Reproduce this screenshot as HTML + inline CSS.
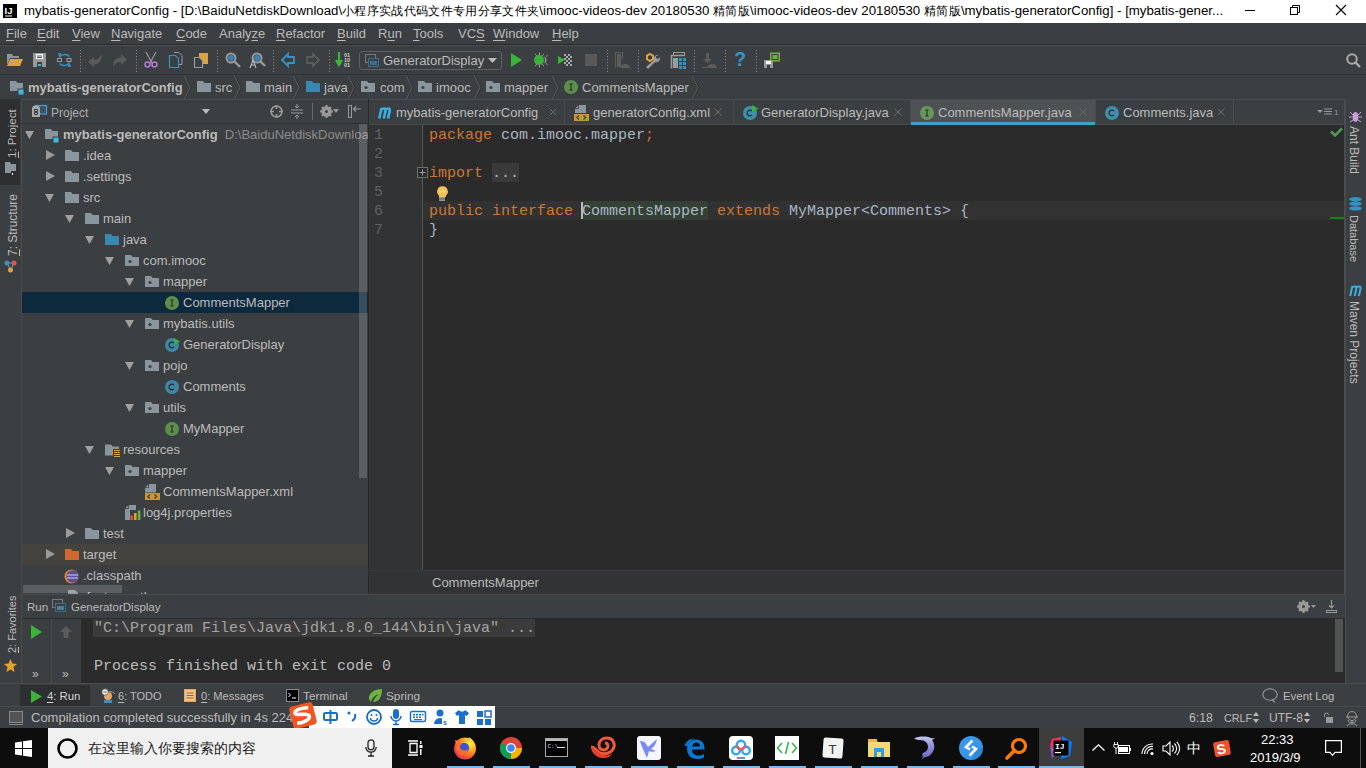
<!DOCTYPE html><html><head><meta charset="utf-8"><style>
*{margin:0;padding:0;box-sizing:border-box}
html,body{width:1366px;height:768px;overflow:hidden;background:#3c3f41;font-family:"Liberation Sans",sans-serif;font-size:13px;color:#bbbbbb}
.a{position:absolute}
.t{position:absolute;white-space:pre;line-height:16px}
.mono{font-family:"Liberation Mono",monospace}
u{text-decoration:underline;text-underline-offset:2px;text-decoration-thickness:1px}
svg{position:absolute;overflow:visible}
.cj{font-size:12.4px;letter-spacing:0.32px}
</style></head><body>
<div class="a" style="left:0px;top:0px;width:1366px;height:23px;background:#ffffff;"></div>
<svg style="left:3px;top:4px;" width="14" height="14" viewBox="0 0 14 14"><rect x="0" y="0" width="14" height="14" fill="#000"/><text x="1.5" y="9.5" font-family="Liberation Sans" font-weight="bold" font-size="9.5" fill="#fff">IJ</text><rect x="2" y="11.5" width="7" height="1" fill="#fff"/></svg>
<div class="t" style="left:24px;top:3px;color:#000000;font-size:13.25px;">mybatis-generatorConfig - [D:\BaiduNetdiskDownload\<span class="cj">小程序实战代码文件专用分享文件夹</span>\imooc-videos-dev 20180530 <span class="cj">精简版</span>\imooc-videos-dev 20180530 <span class="cj">精简版</span>\mybatis-generatorConfig] - [mybatis-gener...</div>
<svg style="left:1245px;top:10px;" width="10" height="1" viewBox="0 0 10 1"><rect width="10" height="1" fill="#000"/></svg>
<svg style="left:1290px;top:5px;" width="10" height="10" viewBox="0 0 10 10"><rect x="0.5" y="2.5" width="7" height="7" fill="none" stroke="#000"/><path d="M2.5 2.5V0.5H9.5V7.5H7.5" fill="none" stroke="#000"/></svg>
<svg style="left:1336px;top:5px;" width="10" height="10" viewBox="0 0 10 10"><path d="M0 0L10 10M10 0L0 10" stroke="#000" stroke-width="1.1"/></svg>
<div class="a" style="left:0px;top:23px;width:1366px;height:22px;background:#3c3f41;"></div>
<div class="a" style="left:0px;top:44px;width:1366px;height:1px;background:#2b2b2b;"></div>
<div class="t" style="left:6px;top:26px;color:#bbbbbb;font-size:13px;"><u>F</u>ile</div>
<div class="t" style="left:37px;top:26px;color:#bbbbbb;font-size:13px;"><u>E</u>dit</div>
<div class="t" style="left:72px;top:26px;color:#bbbbbb;font-size:13px;"><u>V</u>iew</div>
<div class="t" style="left:111px;top:26px;color:#bbbbbb;font-size:13px;"><u>N</u>avigate</div>
<div class="t" style="left:176px;top:26px;color:#bbbbbb;font-size:13px;"><u>C</u>ode</div>
<div class="t" style="left:219px;top:26px;color:#bbbbbb;font-size:13px;">Analy<u>z</u>e</div>
<div class="t" style="left:276px;top:26px;color:#bbbbbb;font-size:13px;"><u>R</u>efactor</div>
<div class="t" style="left:337px;top:26px;color:#bbbbbb;font-size:13px;"><u>B</u>uild</div>
<div class="t" style="left:378px;top:26px;color:#bbbbbb;font-size:13px;">R<u>u</u>n</div>
<div class="t" style="left:413px;top:26px;color:#bbbbbb;font-size:13px;"><u>T</u>ools</div>
<div class="t" style="left:458px;top:26px;color:#bbbbbb;font-size:13px;">VC<u>S</u></div>
<div class="t" style="left:493px;top:26px;color:#bbbbbb;font-size:13px;"><u>W</u>indow</div>
<div class="t" style="left:552px;top:26px;color:#bbbbbb;font-size:13px;"><u>H</u>elp</div>
<div class="a" style="left:0px;top:45px;width:1366px;height:30px;background:#3c3f41;"></div>
<div class="a" style="left:0px;top:45px;width:1366px;height:1px;background:#4b4d4f;"></div>
<div class="a" style="left:0px;top:74px;width:1366px;height:1px;background:#323232;"></div>
<svg style="left:80px;top:50px;" width="1" height="22" viewBox="0 0 1 22"><line x1="0.5" y1="0" x2="0.5" y2="22" stroke="#8a8a8a" stroke-dasharray="1 2"/></svg>
<svg style="left:136px;top:50px;" width="1" height="22" viewBox="0 0 1 22"><line x1="0.5" y1="0" x2="0.5" y2="22" stroke="#8a8a8a" stroke-dasharray="1 2"/></svg>
<svg style="left:217px;top:50px;" width="1" height="22" viewBox="0 0 1 22"><line x1="0.5" y1="0" x2="0.5" y2="22" stroke="#8a8a8a" stroke-dasharray="1 2"/></svg>
<svg style="left:273px;top:50px;" width="1" height="22" viewBox="0 0 1 22"><line x1="0.5" y1="0" x2="0.5" y2="22" stroke="#8a8a8a" stroke-dasharray="1 2"/></svg>
<svg style="left:329px;top:50px;" width="1" height="22" viewBox="0 0 1 22"><line x1="0.5" y1="0" x2="0.5" y2="22" stroke="#8a8a8a" stroke-dasharray="1 2"/></svg>
<svg style="left:607px;top:50px;" width="1" height="22" viewBox="0 0 1 22"><line x1="0.5" y1="0" x2="0.5" y2="22" stroke="#8a8a8a" stroke-dasharray="1 2"/></svg>
<svg style="left:638px;top:50px;" width="1" height="22" viewBox="0 0 1 22"><line x1="0.5" y1="0" x2="0.5" y2="22" stroke="#8a8a8a" stroke-dasharray="1 2"/></svg>
<svg style="left:694px;top:50px;" width="1" height="22" viewBox="0 0 1 22"><line x1="0.5" y1="0" x2="0.5" y2="22" stroke="#8a8a8a" stroke-dasharray="1 2"/></svg>
<svg style="left:725px;top:50px;" width="1" height="22" viewBox="0 0 1 22"><line x1="0.5" y1="0" x2="0.5" y2="22" stroke="#8a8a8a" stroke-dasharray="1 2"/></svg>
<svg style="left:756px;top:50px;" width="1" height="22" viewBox="0 0 1 22"><line x1="0.5" y1="0" x2="0.5" y2="22" stroke="#8a8a8a" stroke-dasharray="1 2"/></svg>
<svg style="left:7px;top:53px;" width="16" height="14" viewBox="0 0 16 14"><path d="M0 1h5l1 2h6v2H3L0 12z" fill="#8a969d"/><path d="M3 6h13l-3 7H0z" fill="#d9a343"/></svg>
<svg style="left:33px;top:53px;" width="13" height="14" viewBox="0 0 13 14"><path d="M0 0h13v14H0z" fill="#9a9a9a"/><rect x="3" y="1" width="7" height="5" fill="#fff"/><rect x="4" y="2.5" width="5" height="1" fill="#555"/><rect x="4" y="4" width="5" height="1" fill="#555"/><rect x="4" y="9" width="5" height="5" fill="#3c3f41"/><rect x="5" y="11" width="3" height="2" fill="#40b6e0"/></svg>
<svg style="left:57px;top:52px;" width="15" height="16" viewBox="0 0 15 16"><rect x="0.5" y="6.5" width="4" height="3" fill="none" stroke="#9a9a9a"/><rect x="10" y="6.5" width="4" height="3" fill="none" stroke="#9a9a9a"/><path d="M2.5 5.5A6 5.5 0 0 1 12.5 4.5" fill="none" stroke="#3592c4" stroke-width="1.5"/><path d="M0.5 1.5L4.5 1L3 5.5z" fill="#3592c4"/><path d="M12.5 10.5A6 5.5 0 0 1 2.5 11.5" fill="none" stroke="#3592c4" stroke-width="1.5"/><path d="M14.5 14.5L10.5 15L12 10.5z" fill="#3592c4"/></svg>
<svg style="left:88px;top:54px;" width="15" height="13" viewBox="0 0 15 13"><path d="M0 8L6 2.5V6C9 6 12 4 13.5 0C14.5 6 11 10.5 6 10.5V13z" fill="#5a5a5a"/></svg>
<svg style="left:112px;top:54px;" width="15" height="13" viewBox="0 0 15 13"><path d="M15 5.5L9 0V3.5C4 3.5 0.5 7 1.5 13C3 9 6 8 9 8V11z" fill="#5a5a5a"/></svg>
<svg style="left:144px;top:52px;" width="14" height="16" viewBox="0 0 14 16"><path d="M2 0L8 11M12 0L6 11" stroke="#9a9a9a" stroke-width="1.2"/><circle cx="3.5" cy="12.5" r="2.5" fill="none" stroke="#b87ad4" stroke-width="1.5"/><circle cx="10.5" cy="12.5" r="2.5" fill="none" stroke="#b87ad4" stroke-width="1.5"/></svg>
<svg style="left:169px;top:52px;" width="14" height="16" viewBox="0 0 14 16"><path d="M5 0.5h5l3 3v9h-3" fill="none" stroke="#9a9a9a"/><path d="M0.5 3.5h6l3 3v9h-9z" fill="none" stroke="#3592c4" stroke-width="1.2"/></svg>
<svg style="left:194px;top:52px;" width="14" height="16" viewBox="0 0 14 16"><rect x="5" y="1" width="9" height="11" fill="#d9a343"/><path d="M0.5 5.5h5l3 3v7h-8z" fill="#3c3f41" stroke="#9a9a9a" stroke-width="1.2"/></svg>
<svg style="left:225px;top:52px;" width="16" height="16" viewBox="0 0 16 16"><circle cx="6" cy="6" r="4.5" fill="none" stroke="#9a9a9a" stroke-width="2"/><circle cx="6" cy="6" r="3" fill="#3a84b8"/><path d="M9 9l6 6" stroke="#9a9a9a" stroke-width="2.4"/></svg>
<svg style="left:250px;top:52px;" width="16" height="17" viewBox="0 0 16 17"><circle cx="7" cy="6" r="4.5" fill="none" stroke="#9a9a9a" stroke-width="2"/><circle cx="7" cy="6" r="3" fill="#3a84b8"/><path d="M10 9l5 5" stroke="#9a9a9a" stroke-width="2.4"/><path d="M0 16L3 8L6 16M1 13h4" fill="none" stroke="#bbbbbb" stroke-width="1.1"/></svg>
<svg style="left:281px;top:53px;" width="14" height="14" viewBox="0 0 14 14"><path d="M1 7L7 1v3h6v6H7v3z" fill="none" stroke="#3592c4" stroke-width="1.8"/></svg>
<svg style="left:307px;top:53px;" width="13" height="14" viewBox="0 0 13 14"><path d="M12 7L6 1v3H0v6h6v3z" fill="none" stroke="#5c5c5c" stroke-width="1.8"/></svg>
<svg style="left:336px;top:52px;" width="17" height="16" viewBox="0 0 17 16"><path d="M3 0v10M0 8l3 5l3-5" stroke="#3bb33b" stroke-width="2.2" fill="#3bb33b"/><text x="8" y="5" font-size="5.5" font-family="Liberation Sans" font-weight="bold" fill="#cfcfcf">01</text><text x="8" y="10" font-size="5.5" font-family="Liberation Sans" font-weight="bold" fill="#cfcfcf">10</text><text x="8" y="15" font-size="5.5" font-family="Liberation Sans" font-weight="bold" fill="#cfcfcf">01</text></svg>
<div class="a" style="left:359px;top:51px;width:143px;height:19px;background:transparent;border:1px solid #5e6162;border-radius:3px"></div>
<svg style="left:365px;top:54px;" width="14" height="13" viewBox="0 0 14 13"><rect x="0.5" y="0.5" width="10" height="8" fill="none" stroke="#7a7a7a"/><rect x="3.5" y="4.5" width="10" height="8" fill="#3c3f41" stroke="#3d6e8c"/><rect x="5" y="7" width="7" height="4" fill="#3d6e8c"/></svg>
<div class="t" style="left:383px;top:53px;color:#bbbbbb;font-size:13px;">GeneratorDisplay</div>
<svg style="left:488px;top:58px;" width="9" height="6" viewBox="0 0 9 6"><path d="M0 0h9L4.5 5z" fill="#bbbbbb"/></svg>
<svg style="left:511px;top:53px;" width="11" height="14" viewBox="0 0 11 14"><path d="M0 0L11 7L0 14z" fill="#3bb33b"/></svg>
<svg style="left:533px;top:52px;" width="16" height="16" viewBox="0 0 16 16"><path d="M2 2l2 2M6.5 0.5v3M11 2l-2 2M2 14l2-2M6.5 15.5v-3M11 14l-2-2" stroke="#9a9a9a" stroke-width="1"/><circle cx="6" cy="8" r="5" fill="#3bb33b"/><path d="M2 7.5h8" stroke="#34a034" stroke-width="0.8"/><path d="M9.5 3.5a4.5 4.5 0 0 1 0 9a3 4.5 0 0 0 0-9z" fill="#3c3f41"/><path d="M10 4.5a3.5 3.5 0 0 1 0 7a2 3.5 0 0 0 0-7z" fill="#9a9a9a"/><path d="M13 4.5l1.5-1M13 11.5l1.5 1" stroke="#9a9a9a"/></svg>
<svg style="left:558px;top:53px;" width="15" height="14" viewBox="0 0 15 14"><path d="M0 3L7 7L0 11z" fill="#3bb33b"/><g fill="#aaaaaa"><rect x="6" y="1" width="2" height="2"/><rect x="10" y="1" width="2" height="2"/><rect x="8" y="3" width="2" height="2"/><rect x="12" y="3" width="2" height="2"/><rect x="6" y="5" width="2" height="2"/><rect x="10" y="5" width="2" height="2"/><rect x="8" y="7" width="2" height="2"/><rect x="12" y="7" width="2" height="2"/><rect x="6" y="9" width="2" height="2"/><rect x="10" y="9" width="2" height="2"/><rect x="8" y="11" width="2" height="2"/><rect x="12" y="11" width="2" height="2"/></g></svg>
<svg style="left:585px;top:54px;" width="12" height="12" viewBox="0 0 12 12"><rect width="12" height="12" fill="#595959"/></svg>
<svg style="left:615px;top:52px;" width="15" height="16" viewBox="0 0 15 16"><path d="M0.5 15.5V0.5h7v7" fill="none" stroke="#5c5c5c" stroke-width="1.2"/><rect x="2" y="2" width="4" height="13" fill="#5c5c5c"/><path d="M5 16a5 4 0 0 1 10 0z" fill="#5c5c5c"/></svg>
<svg style="left:645px;top:53px;" width="16" height="16" viewBox="0 0 16 16"><path d="M5 1l3 1.7v3.5L5 8L2 6.2V2.7z" fill="none" stroke="#d9a343" stroke-width="2"/><path d="M14 2a4 4 0 0 0-5 5L1 14l2 2l7-7a4 4 0 0 0 5-5l-2 2l-2-1l-0-2z" fill="#9a9a9a"/></svg>
<svg style="left:671px;top:52px;" width="16" height="17" viewBox="0 0 16 17"><rect x="2.5" y="0.5" width="11" height="3" fill="none" stroke="#9a9a9a"/><path d="M0.5 16.5V3.5h12" fill="none" stroke="#9a9a9a" stroke-width="1.5"/><rect x="2" y="6" width="5" height="10" fill="#9a9a9a"/><g fill="#3592c4"><rect x="8" y="6" width="3" height="3"/><rect x="12" y="6" width="3" height="3"/><rect x="8" y="10" width="3" height="3"/><rect x="12" y="10" width="3" height="3"/><rect x="8" y="14" width="3" height="3"/><rect x="12" y="14" width="3" height="3"/></g></svg>
<svg style="left:702px;top:53px;" width="15" height="15" viewBox="0 0 15 15"><rect x="4" y="0" width="3" height="8" fill="#5c5c5c"/><path d="M1 6l4.5 4l4.5-4z" fill="#5c5c5c"/><path d="M5 15a5 4 0 0 1 10 0z" fill="#5c5c5c"/><rect x="0" y="14" width="6" height="1" fill="#5c5c5c"/></svg>
<div class="t" style="left:734px;top:47px;color:#3592c4;font-size:20px;font-weight:bold;line-height:24px">?</div>
<svg style="left:764px;top:52px;" width="17" height="16" viewBox="0 0 17 16"><rect x="6" y="0.5" width="10" height="9" fill="#62b543"/><rect x="8" y="2.5" width="6" height="5" fill="none" stroke="#3c3f41"/><path d="M0 8h9v8H0z" fill="#9a9a9a"/><rect x="2" y="9" width="5" height="3" fill="#fff"/><rect x="3" y="13" width="3" height="3" fill="#3c3f41"/></svg>
<svg style="left:1346px;top:53px;" width="15" height="15" viewBox="0 0 15 15"><circle cx="6" cy="6" r="4.8" fill="none" stroke="#aaaaaa" stroke-width="2"/><path d="M9.5 9.5l4.5 4.5" stroke="#aaaaaa" stroke-width="2.4"/></svg>
<div class="a" style="left:0px;top:75px;width:1366px;height:24px;background:#3c3f41;"></div>
<div class="a" style="left:21px;top:99px;width:1345px;height:1px;background:#4b4b4b;"></div>
<svg style="left:10px;top:81px;" width="15" height="15" viewBox="0 0 15 15"><path d="M0 0h6l1.5 2H13v8H0z" fill="#8a969d"/><rect x="8" y="8" width="6" height="6" fill="#40b6e0" stroke="#3c3f41" stroke-width="1"/></svg>
<div class="t" style="left:28px;top:80px;color:#bbbbbb;font-size:13px;font-weight:bold">mybatis-generatorConfig</div>
<svg style="left:184px;top:76px;" width="8" height="23" viewBox="0 0 8 23"><path d="M1.5 0L7 11.5L1.5 23" fill="none" stroke="#2f3133" stroke-width="1"/><path d="M0.5 0L6 11.5L0.5 23" fill="none" stroke="#5a5d5f" stroke-width="1"/></svg>
<svg style="left:197px;top:81px;" width="14" height="11" viewBox="0 0 14 11"><path d="M0 0h6l1.5 2H14v9H0z" fill="#8a969d"/></svg>
<div class="t" style="left:215px;top:80px;color:#bbbbbb;font-size:13px;">src</div>
<svg style="left:234px;top:76px;" width="8" height="23" viewBox="0 0 8 23"><path d="M1.5 0L7 11.5L1.5 23" fill="none" stroke="#2f3133" stroke-width="1"/><path d="M0.5 0L6 11.5L0.5 23" fill="none" stroke="#5a5d5f" stroke-width="1"/></svg>
<svg style="left:246px;top:81px;" width="14" height="11" viewBox="0 0 14 11"><path d="M0 0h6l1.5 2H14v9H0z" fill="#8a969d"/></svg>
<div class="t" style="left:264px;top:80px;color:#bbbbbb;font-size:13px;">main</div>
<svg style="left:293px;top:76px;" width="8" height="23" viewBox="0 0 8 23"><path d="M1.5 0L7 11.5L1.5 23" fill="none" stroke="#2f3133" stroke-width="1"/><path d="M0.5 0L6 11.5L0.5 23" fill="none" stroke="#5a5d5f" stroke-width="1"/></svg>
<svg style="left:306px;top:81px;" width="14" height="11" viewBox="0 0 14 11"><path d="M0 0h6l1.5 2H14v9H0z" fill="#3a88b0"/></svg>
<div class="t" style="left:324px;top:80px;color:#bbbbbb;font-size:13px;">java</div>
<svg style="left:348px;top:76px;" width="8" height="23" viewBox="0 0 8 23"><path d="M1.5 0L7 11.5L1.5 23" fill="none" stroke="#2f3133" stroke-width="1"/><path d="M0.5 0L6 11.5L0.5 23" fill="none" stroke="#5a5d5f" stroke-width="1"/></svg>
<svg style="left:361px;top:81px;" width="14" height="11" viewBox="0 0 14 11"><path d="M0 0h6l1.5 2H14v9H0z" fill="#8a969d"/><circle cx="5" cy="6.5" r="1.6" fill="#3c3f41"/></svg>
<div class="t" style="left:380px;top:80px;color:#bbbbbb;font-size:13px;">com</div>
<svg style="left:406px;top:76px;" width="8" height="23" viewBox="0 0 8 23"><path d="M1.5 0L7 11.5L1.5 23" fill="none" stroke="#2f3133" stroke-width="1"/><path d="M0.5 0L6 11.5L0.5 23" fill="none" stroke="#5a5d5f" stroke-width="1"/></svg>
<svg style="left:418px;top:81px;" width="14" height="11" viewBox="0 0 14 11"><path d="M0 0h6l1.5 2H14v9H0z" fill="#8a969d"/><circle cx="5" cy="6.5" r="1.6" fill="#3c3f41"/></svg>
<div class="t" style="left:436px;top:80px;color:#bbbbbb;font-size:13px;">imooc</div>
<svg style="left:474px;top:76px;" width="8" height="23" viewBox="0 0 8 23"><path d="M1.5 0L7 11.5L1.5 23" fill="none" stroke="#2f3133" stroke-width="1"/><path d="M0.5 0L6 11.5L0.5 23" fill="none" stroke="#5a5d5f" stroke-width="1"/></svg>
<svg style="left:486px;top:81px;" width="14" height="11" viewBox="0 0 14 11"><path d="M0 0h6l1.5 2H14v9H0z" fill="#8a969d"/><circle cx="5" cy="6.5" r="1.6" fill="#3c3f41"/></svg>
<div class="t" style="left:504px;top:80px;color:#bbbbbb;font-size:13px;">mapper</div>
<svg style="left:552px;top:76px;" width="8" height="23" viewBox="0 0 8 23"><path d="M1.5 0L7 11.5L1.5 23" fill="none" stroke="#2f3133" stroke-width="1"/><path d="M0.5 0L6 11.5L0.5 23" fill="none" stroke="#5a5d5f" stroke-width="1"/></svg>
<svg style="left:564px;top:80px;" width="14" height="14" viewBox="0 0 14 14"><circle cx="7" cy="7" r="7" fill="#5b8f4a"/><path d="M5.3 4h3.4M7 4v6M5.3 10h3.4" stroke="#2b2b2b" stroke-width="1.1"/></svg>
<div class="t" style="left:582px;top:80px;color:#bbbbbb;font-size:13px;">CommentsMapper</div>
<svg style="left:692px;top:76px;" width="8" height="23" viewBox="0 0 8 23"><path d="M1.5 0L7 11.5L1.5 23" fill="none" stroke="#2f3133" stroke-width="1"/><path d="M0.5 0L6 11.5L0.5 23" fill="none" stroke="#5a5d5f" stroke-width="1"/></svg>
<div class="a" style="left:0px;top:99px;width:21px;height:584px;background:#3c3f41;"></div>
<div class="a" style="left:21px;top:99px;width:1px;height:584px;background:#4b4b4b;"></div>
<div class="a" style="left:0px;top:99px;width:20px;height:86px;background:#2d2f30;"></div>
<div class="t" style="left:4px;top:158px;color:#bbbbbb;font-size:11.5px;transform-origin:0 0;transform:rotate(-90deg)"><u>1</u>: Project</div>
<svg style="left:5px;top:162px;" width="11" height="13" viewBox="0 0 11 13"><path d="M0 0h5l1 2h5v9H0z" fill="#8a969d"/><rect x="6" y="9" width="5" height="4" fill="#2d2f30"/><rect x="7" y="11" width="1" height="2" fill="#fff"/></svg>
<div class="t" style="left:5px;top:256px;color:#bbbbbb;font-size:12px;transform-origin:0 0;transform:rotate(-90deg)"><u>7</u>: Structure</div>
<svg style="left:4px;top:260px;" width="13" height="13" viewBox="0 0 13 13"><path d="M3 3L6.5 10L10 3z" fill="none" stroke="#9a9a9a"/><circle cx="3" cy="3" r="2.5" fill="#3592c4"/><circle cx="10" cy="3" r="2.5" fill="#e05555"/><circle cx="6.5" cy="10" r="2.5" fill="#d9a343"/></svg>
<div class="t" style="left:4px;top:653px;color:#bbbbbb;font-size:11px;transform-origin:0 0;transform:rotate(-90deg)"><u>2</u>: Favorites</div>
<svg style="left:4px;top:659px;" width="13" height="13" viewBox="0 0 13 13"><path d="M6.5 0L8.5 4.5L13 5L9.5 8L10.5 13L6.5 10.5L2.5 13L3.5 8L0 5L4.5 4.5z" fill="#e3a32a"/></svg>
<div class="a" style="left:22px;top:100px;width:346px;height:494px;background:#3c3f41;"></div>
<div class="a" style="left:368px;top:99px;width:1px;height:495px;background:#2b2b2b;"></div>
<div class="a" style="left:21px;top:123px;width:347px;height:1px;background:#323232;"></div>
<svg style="left:32px;top:104px;" width="15" height="14" viewBox="0 0 15 14"><rect x="3.5" y="1.5" width="11" height="8.5" fill="#3a5566" stroke="#4a9fd0" stroke-width="1.2"/><path d="M0 3.5L2 1.5H6L8 3.5V13H0z" fill="#a8a8a8"/><path d="M2.5 5.5h3v2h-3zM2.5 8.5h3v2h-3z" fill="none" stroke="#3c3f41" stroke-width="1"/></svg>
<div class="t" style="left:51px;top:105px;color:#adadad;font-size:12px;">Project</div>
<svg style="left:202px;top:109px;" width="8" height="5" viewBox="0 0 8 5"><path d="M0 0h8L4 5z" fill="#bbbbbb"/></svg>
<svg style="left:270px;top:105px;" width="13" height="13" viewBox="0 0 13 13"><circle cx="6.5" cy="6.5" r="5.5" fill="none" stroke="#9a9a9a" stroke-width="1.5"/><path d="M6.5 0v4M6.5 9v4M0 6.5h4M9 6.5h4" stroke="#9a9a9a" stroke-width="1.5"/></svg>
<svg style="left:291px;top:104px;" width="12" height="15" viewBox="0 0 12 15"><path d="M0 6h12M0 9h12M6 0v4M4 2l2 2l2-2M6 15v-4M4 13l2-2l2 2" fill="none" stroke="#9a9a9a"/></svg>
<div class="a" style="left:312px;top:103px;width:1px;height:17px;background:#6a6a6a;"></div>
<svg style="left:320px;top:105px;" width="13" height="13" viewBox="0 0 13 13"><circle cx="6.5" cy="6.5" r="4" fill="none" stroke="#9a9a9a" stroke-width="2.6"/><path d="M6.5 0v13M0 6.5h13M2 2l9 9M11 2l-9 9" stroke="#9a9a9a" stroke-width="2"/><circle cx="6.5" cy="6.5" r="1.5" fill="#3c3f41"/></svg>
<svg style="left:333px;top:109px;" width="6" height="4" viewBox="0 0 6 4"><path d="M0 0h6L3 4z" fill="#9a9a9a"/></svg>
<svg style="left:348px;top:105px;" width="13" height="13" viewBox="0 0 13 13"><rect x="0.5" y="0.5" width="3" height="12" fill="none" stroke="#9a9a9a"/><path d="M13 4H6M8 1.5L5.5 4L8 6.5" fill="none" stroke="#9a9a9a" stroke-width="1.2"/></svg>
<div class="a" style="left:22px;top:292px;width:346px;height:21px;background:#0d293e;"></div>
<div class="a" style="left:22px;top:544px;width:346px;height:21px;background:#45433d;"></div>
<div class="a" style="left:21px;top:124px;width:347px;height:470px;overflow:hidden">
<svg style="left:4px;top:7px" width="9" height="8"><path d="M0 0h9L4.5 8z" fill="#a0a0a0"/></svg>
<svg style="left:24px;top:5px" width="15" height="15"><path d="M0 0h6l1.5 2H13v8H0z" fill="#8a969d"/><rect x="8" y="8" width="6" height="6" fill="#40b6e0" stroke="#3c3f41" stroke-width="1"/></svg>
<div class="t" style="left:42px;top:3px;color:#bbbbbb"><b style="color:#bbbbbb">mybatis-generatorConfig</b>  <span style="color:#8c8c8c">D:\BaiduNetdiskDownload\小程序</span></div>
<svg style="left:25px;top:26px" width="9" height="10"><path d="M0 0L9 5L0 10z" fill="#9a9a9a"/></svg>
<svg style="left:44px;top:26px" width="14" height="11"><path d="M0 0h6l1.5 2H14v9H0z" fill="#8a969d"/></svg>
<div class="t" style="left:62px;top:24px;color:#bbbbbb">.idea</div>
<svg style="left:25px;top:47px" width="9" height="10"><path d="M0 0L9 5L0 10z" fill="#9a9a9a"/></svg>
<svg style="left:44px;top:47px" width="14" height="11"><path d="M0 0h6l1.5 2H14v9H0z" fill="#8a969d"/></svg>
<div class="t" style="left:62px;top:45px;color:#bbbbbb">.settings</div>
<svg style="left:24px;top:70px" width="9" height="8"><path d="M0 0h9L4.5 8z" fill="#a0a0a0"/></svg>
<svg style="left:44px;top:68px" width="14" height="11"><path d="M0 0h6l1.5 2H14v9H0z" fill="#8a969d"/></svg>
<div class="t" style="left:62px;top:66px;color:#bbbbbb">src</div>
<svg style="left:44px;top:91px" width="9" height="8"><path d="M0 0h9L4.5 8z" fill="#a0a0a0"/></svg>
<svg style="left:64px;top:89px" width="14" height="11"><path d="M0 0h6l1.5 2H14v9H0z" fill="#8a969d"/></svg>
<div class="t" style="left:82px;top:87px;color:#bbbbbb">main</div>
<svg style="left:64px;top:112px" width="9" height="8"><path d="M0 0h9L4.5 8z" fill="#a0a0a0"/></svg>
<svg style="left:84px;top:110px" width="14" height="11"><path d="M0 0h6l1.5 2H14v9H0z" fill="#3a88b0"/></svg>
<div class="t" style="left:102px;top:108px;color:#bbbbbb">java</div>
<svg style="left:84px;top:133px" width="9" height="8"><path d="M0 0h9L4.5 8z" fill="#a0a0a0"/></svg>
<svg style="left:104px;top:131px" width="14" height="11"><path d="M0 0h6l1.5 2H14v9H0z" fill="#8a969d"/><circle cx="5" cy="6.5" r="1.6" fill="#3c3f41"/></svg>
<div class="t" style="left:122px;top:129px;color:#bbbbbb">com.imooc</div>
<svg style="left:104px;top:154px" width="9" height="8"><path d="M0 0h9L4.5 8z" fill="#a0a0a0"/></svg>
<svg style="left:124px;top:152px" width="14" height="11"><path d="M0 0h6l1.5 2H14v9H0z" fill="#8a969d"/><circle cx="5" cy="6.5" r="1.6" fill="#3c3f41"/></svg>
<div class="t" style="left:142px;top:150px;color:#bbbbbb">mapper</div>
<svg style="left:144px;top:172px" width="14" height="14"><circle cx="7" cy="7" r="7" fill="#5b8f4a"/><path d="M5.3 4h3.4M7 4v6M5.3 10h3.4" stroke="#2b2b2b" stroke-width="1.1"/></svg>
<div class="t" style="left:162px;top:171px;color:#bbbbbb">CommentsMapper</div>
<svg style="left:104px;top:196px" width="9" height="8"><path d="M0 0h9L4.5 8z" fill="#a0a0a0"/></svg>
<svg style="left:124px;top:194px" width="14" height="11"><path d="M0 0h6l1.5 2H14v9H0z" fill="#8a969d"/><circle cx="5" cy="6.5" r="1.6" fill="#3c3f41"/></svg>
<div class="t" style="left:142px;top:192px;color:#bbbbbb">mybatis.utils</div>
<svg style="left:144px;top:214px" width="15" height="14"><circle cx="7" cy="7" r="7" fill="#3d88a6"/><path d="M9 5.2a2.8 2.8 0 1 0 0 3.6" fill="none" stroke="#2b2b2b" stroke-width="1.2"/><path d="M9 0L15 3.5L9 7z" fill="#3bb33b"/></svg>
<div class="t" style="left:162px;top:213px;color:#bbbbbb">GeneratorDisplay</div>
<svg style="left:104px;top:238px" width="9" height="8"><path d="M0 0h9L4.5 8z" fill="#a0a0a0"/></svg>
<svg style="left:124px;top:236px" width="14" height="11"><path d="M0 0h6l1.5 2H14v9H0z" fill="#8a969d"/><circle cx="5" cy="6.5" r="1.6" fill="#3c3f41"/></svg>
<div class="t" style="left:142px;top:234px;color:#bbbbbb">pojo</div>
<svg style="left:144px;top:256px" width="15" height="14"><circle cx="7" cy="7" r="7" fill="#3d88a6"/><path d="M9 5.2a2.8 2.8 0 1 0 0 3.6" fill="none" stroke="#2b2b2b" stroke-width="1.2"/></svg>
<div class="t" style="left:162px;top:255px;color:#bbbbbb">Comments</div>
<svg style="left:104px;top:280px" width="9" height="8"><path d="M0 0h9L4.5 8z" fill="#a0a0a0"/></svg>
<svg style="left:124px;top:278px" width="14" height="11"><path d="M0 0h6l1.5 2H14v9H0z" fill="#8a969d"/><circle cx="5" cy="6.5" r="1.6" fill="#3c3f41"/></svg>
<div class="t" style="left:142px;top:276px;color:#bbbbbb">utils</div>
<svg style="left:144px;top:298px" width="14" height="14"><circle cx="7" cy="7" r="7" fill="#5b8f4a"/><path d="M5.3 4h3.4M7 4v6M5.3 10h3.4" stroke="#2b2b2b" stroke-width="1.1"/></svg>
<div class="t" style="left:162px;top:297px;color:#bbbbbb">MyMapper</div>
<svg style="left:64px;top:322px" width="9" height="8"><path d="M0 0h9L4.5 8z" fill="#a0a0a0"/></svg>
<svg style="left:84px;top:320px" width="16" height="14"><path d="M0 0.5h6l1.5 2H14v9H0z" fill="#8a969d"/><rect x="8" y="5" width="8" height="9" fill="#3c3f41"/><path d="M9 6.5h6M9 8.5h6M9 10.5h6M9 12.5h6" stroke="#e0a030" stroke-width="1.1"/></svg>
<div class="t" style="left:102px;top:318px;color:#bbbbbb">resources</div>
<svg style="left:84px;top:343px" width="9" height="8"><path d="M0 0h9L4.5 8z" fill="#a0a0a0"/></svg>
<svg style="left:104px;top:341px" width="14" height="11"><path d="M0 0h6l1.5 2H14v9H0z" fill="#8a969d"/><circle cx="5" cy="6.5" r="1.6" fill="#3c3f41"/></svg>
<div class="t" style="left:122px;top:339px;color:#bbbbbb">mapper</div>
<svg style="left:124px;top:360px" width="16" height="17"><path d="M0 3.5L3.5 0H11V8.5H0z" fill="#8a969d"/><path d="M0 3.5h3.5V0" fill="none" stroke="#3c3f41" stroke-width="0.8"/><rect x="0" y="9" width="15" height="7" fill="#c9953a"/><path d="M5 10.5L2.8 12.5L5 14.5M9.5 10.5L11.7 12.5L9.5 14.5" fill="none" stroke="#3c3f41" stroke-width="1.2"/></svg>
<div class="t" style="left:142px;top:360px;color:#bbbbbb">CommentsMapper.xml</div>
<svg style="left:104px;top:381px" width="16" height="16"><path d="M0 3.5L3.5 0H11V15H0z" fill="#8a969d"/><path d="M0 3.5h3.5V0" fill="none" stroke="#3c3f41" stroke-width="0.8"/><rect x="5" y="5" width="11" height="11" fill="#3c3f41"/><rect x="5.5" y="10.5" width="2.4" height="4.5" fill="#e8572a"/><rect x="9" y="8" width="2.6" height="7" fill="#e0a030"/><rect x="12.8" y="5.5" width="2.6" height="9.5" fill="#62b543"/></svg>
<div class="t" style="left:122px;top:381px;color:#bbbbbb">log4j.properties</div>
<svg style="left:45px;top:404px" width="9" height="10"><path d="M0 0L9 5L0 10z" fill="#9a9a9a"/></svg>
<svg style="left:64px;top:404px" width="14" height="11"><path d="M0 0h6l1.5 2H14v9H0z" fill="#8a969d"/></svg>
<div class="t" style="left:82px;top:402px;color:#bbbbbb">test</div>
<svg style="left:25px;top:425px" width="9" height="10"><path d="M0 0L9 5L0 10z" fill="#9a9a9a"/></svg>
<svg style="left:44px;top:425px" width="14" height="11"><path d="M0 0h6l1.5 2H14v9H0z" fill="#d0692f"/></svg>
<div class="t" style="left:62px;top:423px;color:#bbbbbb">target</div>
<svg style="left:43px;top:445px" width="15" height="15"><circle cx="7.5" cy="7.5" r="7" fill="#e8891f"/><circle cx="8.5" cy="7.5" r="6.2" fill="#5b4d9a"/><path d="M3 6h11M3 9h11" stroke="#d8d0f0" stroke-width="1.2"/></svg>
<div class="t" style="left:62px;top:444px;color:#bbbbbb">.classpath</div>
<svg style="left:44px;top:466px" width="15" height="15"><path d="M3 0h7l3 3v12H3z" fill="#8a969d"/></svg>
<div class="t" style="left:62px;top:465px;color:#bbbbbb">.factorypath</div>
</div>
<div class="a" style="left:359px;top:124px;width:8px;height:354px;background:rgba(255,255,255,0.17);"></div>
<div class="a" style="left:23px;top:585px;width:99px;height:8px;background:rgba(255,255,255,0.17);"></div>
<div class="a" style="left:369px;top:100px;width:976px;height:24px;background:#3c3f41;"></div>
<div class="a" style="left:911px;top:100px;width:184px;height:22px;background:#4e5254;"></div>
<div class="a" style="left:564px;top:100px;width:1px;height:24px;background:#4b4b4b;"></div>
<div class="a" style="left:733px;top:100px;width:1px;height:24px;background:#4b4b4b;"></div>
<div class="a" style="left:910px;top:100px;width:1px;height:24px;background:#4b4b4b;"></div>
<div class="a" style="left:1095px;top:100px;width:1px;height:24px;background:#4b4b4b;"></div>
<div class="a" style="left:1233px;top:100px;width:1px;height:24px;background:#4b4b4b;"></div>
<div class="a" style="left:369px;top:124px;width:976px;height:1px;background:#4b4b4b;"></div>
<div class="a" style="left:911px;top:122px;width:184px;height:3px;background:#40a0c2;"></div>
<svg style="left:378px;top:107px;" width="15" height="12" viewBox="0 0 15 12"><path d="M1.2 11.5L3.6 1M3.2 3C4.5 1.2 7.5 0.8 7.6 2.6C7.7 3.5 7.2 5.5 5.8 11.5M7.4 3C8.7 1.2 11.7 0.8 11.8 2.6C11.9 3.5 11.4 5.5 10 11.5" fill="none" stroke="#3ab0e0" stroke-width="2.6"/></svg>
<div class="t" style="left:396px;top:105px;color:#bbbbbb;font-size:13px;">mybatis-generatorConfig</div>
<svg style="left:549px;top:108px;" width="8" height="8" viewBox="0 0 8 8"><path d="M0.5 0.5l7 7M7.5 0.5l-7 7" stroke="#6a6a6a" stroke-width="1"/></svg>
<svg style="left:574px;top:105px;" width="16" height="16" viewBox="0 0 16 16"><path d="M1 3.5L4.5 0H12V8H1z" fill="#8a969d"/><path d="M1 3.5h3.5V0" fill="none" stroke="#3c3f41" stroke-width="0.8"/><rect x="0" y="9" width="15" height="7" fill="#c9953a"/><path d="M5 10.5L2.8 12.5L5 14.5M9.5 10.5L11.7 12.5L9.5 14.5" fill="none" stroke="#3c3f41" stroke-width="1.2"/></svg>
<div class="t" style="left:593px;top:105px;color:#bbbbbb;font-size:13px;">generatorConfig.xml</div>
<svg style="left:714px;top:108px;" width="8" height="8" viewBox="0 0 8 8"><path d="M0.5 0.5l7 7M7.5 0.5l-7 7" stroke="#6a6a6a" stroke-width="1"/></svg>
<svg style="left:743px;top:105px;" width="16" height="15" viewBox="0 0 16 15"><circle cx="7" cy="8" r="7" fill="#3e8fad"/><path d="M9 6.2a2.8 2.8 0 1 0 0 3.6" fill="none" stroke="#2b2b2b" stroke-width="1.2"/><path d="M9 0L15.5 3.5L9 7z" fill="#3bb33b"/></svg>
<div class="t" style="left:761px;top:105px;color:#bbbbbb;font-size:13px;">GeneratorDisplay.java</div>
<svg style="left:894px;top:108px;" width="8" height="8" viewBox="0 0 8 8"><path d="M0.5 0.5l7 7M7.5 0.5l-7 7" stroke="#6a6a6a" stroke-width="1"/></svg>
<svg style="left:920px;top:106px;" width="14" height="14" viewBox="0 0 14 14"><circle cx="7" cy="7" r="7" fill="#66985a"/><path d="M5.3 4h3.4M7 4v6M5.3 10h3.4" stroke="#2b2b2b" stroke-width="1.1"/></svg>
<div class="t" style="left:938px;top:105px;color:#bbbbbb;font-size:13px;">CommentsMapper.java</div>
<svg style="left:1079px;top:108px;" width="8" height="8" viewBox="0 0 8 8"><path d="M0.5 0.5l7 7M7.5 0.5l-7 7" stroke="#6a6a6a" stroke-width="1"/></svg>
<svg style="left:1105px;top:106px;" width="14" height="14" viewBox="0 0 14 14"><circle cx="7" cy="7" r="7" fill="#3e8fad"/><path d="M9 5.2a2.8 2.8 0 1 0 0 3.6" fill="none" stroke="#2b2b2b" stroke-width="1.2"/></svg>
<div class="t" style="left:1123px;top:105px;color:#bbbbbb;font-size:13px;">Comments.java</div>
<svg style="left:1217px;top:108px;" width="8" height="8" viewBox="0 0 8 8"><path d="M0.5 0.5l7 7M7.5 0.5l-7 7" stroke="#6a6a6a" stroke-width="1"/></svg>
<svg style="left:1317px;top:108px;" width="22" height="8" viewBox="0 0 22 8"><path d="M0 2h6L3 5z" fill="#9a9a9a"/><path d="M7 1h8M7 3.5h8M7 6h8" stroke="#9a9a9a"/><text x="17" y="7" font-size="8" font-family="Liberation Sans" fill="#9a9a9a">1</text></svg>
<div class="a" style="left:369px;top:125px;width:976px;height:445px;background:#2b2b2b;"></div>
<div class="a" style="left:369px;top:125px;width:53px;height:445px;background:#313335;"></div>
<div class="a" style="left:422px;top:125px;width:1px;height:445px;background:#555555;"></div>
<div class="a" style="left:492px;top:163px;width:27px;height:19px;background:#3a3a3a;"></div>
<div class="a" style="left:423px;top:201px;width:922px;height:19px;background:#323232;"></div>
<div class="a" style="left:582px;top:201px;width:126px;height:19px;background:#344134;"></div>
<div class="t mono" style="left:374px;top:126px;color:#606366;font-size:15px;line-height:19px">1</div>
<div class="t mono" style="left:374px;top:145px;color:#606366;font-size:15px;line-height:19px">2</div>
<div class="t mono" style="left:374px;top:164px;color:#606366;font-size:15px;line-height:19px">3</div>
<div class="t mono" style="left:374px;top:183px;color:#606366;font-size:15px;line-height:19px">5</div>
<div class="t mono" style="left:374px;top:202px;color:#606366;font-size:15px;line-height:19px">6</div>
<div class="t mono" style="left:374px;top:221px;color:#606366;font-size:15px;line-height:19px">7</div>
<div class="t mono" style="left:429px;top:126px;color:#a9b7c6;font-size:15px;line-height:19px"><span style="color:#cc7832">package</span> com.imooc.mapper<span style="color:#cc7832">;</span></div>
<div class="t mono" style="left:429px;top:164px;color:#a9b7c6;font-size:15px;line-height:19px"><span style="color:#cc7832">import</span> ...</div>
<div class="t mono" style="left:429px;top:202px;color:#a9b7c6;font-size:15px;line-height:19px"><span style="color:#cc7832">public interface</span> CommentsMapper <span style="color:#cc7832">extends</span> MyMapper&lt;Comments&gt; {</div>
<div class="t mono" style="left:429px;top:221px;color:#a9b7c6;font-size:15px;line-height:19px">}</div>
<div class="a" style="left:581px;top:202px;width:2px;height:17px;background:#bbbbbb;"></div>
<svg style="left:417px;top:167px;" width="11" height="11" viewBox="0 0 11 11"><rect x="0.5" y="0.5" width="10" height="10" fill="#2b2b2b" stroke="#6f6f6f"/><path d="M2.5 5.5h6M5.5 2.5v6" stroke="#9a9a9a"/></svg>
<svg style="left:437px;top:186px;" width="11" height="15" viewBox="0 0 11 15"><path d="M5.5 0.3a5.2 5.2 0 0 1 3.5 9.2V11H2V9.5A5.2 5.2 0 0 1 5.5 0.3z" fill="#f2c05a"/><path d="M2.5 4.5l1.5 2l1.5-1.5l1.5 1.5l1.5-2" fill="none" stroke="#fff3c0" stroke-width="0.8"/><rect x="2" y="11" width="6" height="4" fill="#a0a0a0"/><path d="M2 12.3h6M2 13.7h6" stroke="#555" stroke-width="0.6"/></svg>
<svg style="left:1330px;top:127px;" width="13" height="10" viewBox="0 0 13 10"><path d="M1 4.5l4 4L12 1.5" fill="none" stroke="#4f9a55" stroke-width="2.6"/></svg>
<div class="a" style="left:1330px;top:217px;width:14px;height:2px;background:#0a8a0a;"></div>
<div class="a" style="left:369px;top:570px;width:976px;height:24px;background:#313335;"></div>
<div class="a" style="left:369px;top:570px;width:975px;height:1px;background:#3a3a3a;"></div>
<div class="t" style="left:432px;top:575px;color:#bbbbbb;font-size:13px;">CommentsMapper</div>
<div class="a" style="left:1345px;top:99px;width:21px;height:584px;background:#3c3f41;"></div>
<div class="a" style="left:1344px;top:100px;width:2px;height:583px;background:#4a4c4e;"></div>
<svg style="left:1349px;top:110px;" width="13" height="13" viewBox="0 0 13 13"><ellipse cx="6.5" cy="7" rx="3" ry="5" fill="#c9a0dc"/><path d="M1 2l3 3M12 2l-3 3M0 7h3M10 7h3M1 12l3-2M12 12l-3-2" stroke="#c9a0dc"/></svg>
<div class="t" style="left:1362px;top:126px;color:#bbbbbb;font-size:12px;transform-origin:0 0;transform:rotate(90deg)">Ant Build</div>
<svg style="left:1349px;top:197px;" width="13" height="14" viewBox="0 0 13 14"><ellipse cx="6.5" cy="2.2" rx="6.3" ry="2.2" fill="#3592c4"/><ellipse cx="6.5" cy="6.8" rx="6.3" ry="2.2" fill="#3592c4"/><ellipse cx="6.5" cy="11.4" rx="6.3" ry="2.2" fill="#3592c4"/></svg>
<div class="t" style="left:1362px;top:215px;color:#bbbbbb;font-size:11px;transform-origin:0 0;transform:rotate(90deg)">Database</div>
<svg style="left:1349px;top:285px;" width="15" height="12" viewBox="0 0 15 12"><path d="M1.2 11L3.4 1M3 3C4.3 1.2 7.3 0.8 7.4 2.6C7.5 3.5 7 5.5 5.6 11M7.2 3C8.5 1.2 11.5 0.8 11.6 2.6C11.7 3.5 11.2 5.5 9.8 11" fill="none" stroke="#3ab0e0" stroke-width="2"/></svg>
<div class="t" style="left:1362px;top:301px;color:#bbbbbb;font-size:12px;transform-origin:0 0;transform:rotate(90deg)">Maven Projects</div>
<div class="a" style="left:22px;top:594px;width:1323px;height:1px;background:#4b4b4b;"></div>
<div class="a" style="left:22px;top:595px;width:1323px;height:23px;background:#3c3f41;"></div>
<div class="a" style="left:22px;top:618px;width:1323px;height:1px;background:#2b2b2b;"></div>
<div class="t" style="left:27px;top:599px;color:#bbbbbb;font-size:11.5px;">Run</div>
<svg style="left:52px;top:599px;" width="15" height="14" viewBox="0 0 15 14"><rect x="0.5" y="0.5" width="10" height="8" fill="none" stroke="#7a7a7a"/><rect x="3.5" y="4.5" width="10" height="8" fill="#3c3f41" stroke="#3d6e8c"/><rect x="5" y="7" width="7" height="4" fill="#4f7c96"/></svg>
<div class="t" style="left:71px;top:599px;color:#bbbbbb;font-size:11.5px;">GeneratorDisplay</div>
<svg style="left:1297px;top:600px;" width="19" height="13" viewBox="0 0 19 13"><circle cx="6.5" cy="6.5" r="4" fill="none" stroke="#9a9a9a" stroke-width="2.6"/><path d="M6.5 0v13M0 6.5h13M2 2l9 9M11 2l-9 9" stroke="#9a9a9a" stroke-width="2"/><circle cx="6.5" cy="6.5" r="1.5" fill="#3c3f41"/><path d="M14 5h5L16.5 8z" fill="#9a9a9a"/></svg>
<svg style="left:1326px;top:600px;" width="11" height="13" viewBox="0 0 11 13"><path d="M5.5 0v8M3 5.5l2.5 2.5l2.5-2.5" fill="none" stroke="#9a9a9a" stroke-width="1.2"/><rect x="0" y="10" width="11" height="3" fill="#9a9a9a"/><rect x="1" y="11" width="9" height="1" fill="#3c3f41"/></svg>
<div class="a" style="left:22px;top:619px;width:1323px;height:64px;background:#2b2b2b;"></div>
<div class="a" style="left:22px;top:619px;width:29px;height:64px;background:#3c3f41;"></div>
<div class="a" style="left:51px;top:619px;width:1px;height:64px;background:#4b4b4b;"></div>
<div class="a" style="left:52px;top:619px;width:29px;height:64px;background:#3c3f41;"></div>
<svg style="left:31px;top:625px;" width="11" height="14" viewBox="0 0 11 14"><path d="M0 0L11 7L0 14z" fill="#3bb33b"/></svg>
<svg style="left:60px;top:626px;" width="12" height="12" viewBox="0 0 12 12"><path d="M6 0L12 6H8.5v6h-5V6H0z" fill="#5c5c5c"/></svg>
<div class="t" style="left:32px;top:666px;color:#bbbbbb;font-size:12px;">»</div>
<div class="t" style="left:62px;top:666px;color:#bbbbbb;font-size:12px;">»</div>
<div class="a" style="left:93px;top:619px;width:442px;height:18px;background:#3b3b3b;"></div>
<div class="t mono" style="left:94px;top:619px;color:#a4a4a4;font-size:15px;line-height:19px">"C:\Program Files\Java\jdk1.8.0_144\bin\java" ...</div>
<div class="t mono" style="left:94px;top:657px;color:#bbbbbb;font-size:15px;line-height:19px">Process finished with exit code 0</div>
<div class="a" style="left:1335px;top:619px;width:8px;height:53px;background:#505254;"></div>
<div class="a" style="left:0px;top:683px;width:1366px;height:1px;background:#4b4b4b;"></div>
<div class="a" style="left:0px;top:684px;width:1366px;height:22px;background:#3c3f41;"></div>
<div class="a" style="left:20px;top:685px;width:70px;height:21px;background:#2d2f30;"></div>
<svg style="left:31px;top:690px;" width="11" height="13" viewBox="0 0 11 13"><path d="M0 0L11 6.5L0 13z" fill="#3bb33b"/></svg>
<div class="t" style="left:47px;top:688px;color:#d4d4d4;font-size:11.3px;"><u>4</u>: Run</div>
<svg style="left:101px;top:688px;" width="14" height="15" viewBox="0 0 14 15"><circle cx="7" cy="8" r="4" fill="#e8a75c"/><rect x="3" y="12" width="8" height="3" fill="#3592c4"/><circle cx="4" cy="4" r="3.2" fill="#eee" stroke="#555" stroke-width="0.8"/><path d="M2.5 4h3" stroke="#555"/><path d="M7 4a5 3 0 0 1 7 2" fill="none" stroke="#9a9a9a"/></svg>
<div class="t" style="left:118px;top:688px;color:#bbbbbb;font-size:11px;"><u>6</u>: TODO</div>
<svg style="left:184px;top:689px;" width="12" height="13" viewBox="0 0 12 13"><rect x="0" y="0" width="12" height="13" fill="#e8a75c"/><rect x="1" y="1" width="10" height="11" fill="#f2c58a"/><path d="M2.5 4h7M2.5 6.5h7M2.5 9h7" stroke="#8a6a3a"/></svg>
<div class="t" style="left:201px;top:688px;color:#bbbbbb;font-size:11.1px;"><u>0</u>: Messages</div>
<svg style="left:286px;top:689px;" width="13" height="13" viewBox="0 0 13 13"><rect x="0.5" y="0.5" width="12" height="12" fill="#000" stroke="#8a8a8a"/><path d="M2.5 4l2 2l-2 2M6 9h4" stroke="#fff" fill="none"/></svg>
<div class="t" style="left:303px;top:688px;color:#bbbbbb;font-size:11.8px;">Terminal</div>
<svg style="left:369px;top:689px;" width="13" height="13" viewBox="0 0 13 13"><path d="M13 0C5 0 0 4 0 9c0 2 1 3 2 4c1-4 4-7 8-8c-3 2-5 5-6 8c6 0 9-5 9-13z" fill="#6db33f"/></svg>
<div class="t" style="left:386px;top:688px;color:#bbbbbb;font-size:11.8px;">Spring</div>
<svg style="left:1262px;top:688px;" width="16" height="15" viewBox="0 0 16 15"><ellipse cx="8" cy="6.5" rx="7.2" ry="5.8" fill="none" stroke="#9a9a9a" stroke-width="1.1"/><path d="M10 11.5l3 3" stroke="#9a9a9a" stroke-width="1.1"/></svg>
<div class="t" style="left:1283px;top:688px;color:#bbbbbb;font-size:11.4px;">Event Log</div>
<div class="a" style="left:0px;top:706px;width:1366px;height:1px;background:#484a4c;"></div>
<div class="a" style="left:0px;top:707px;width:1366px;height:21px;background:#3c3f41;"></div>
<svg style="left:9px;top:711px;" width="14" height="14" viewBox="0 0 14 14"><rect x="0.5" y="0.5" width="13" height="11" fill="#555" stroke="#8a8a8a"/><rect x="0" y="13" width="14" height="1" fill="#8a8a8a"/></svg>
<div class="t" style="left:31px;top:710px;color:#bbbbbb;font-size:13px;">Compilation completed successfully in 4s 224</div>
<div class="t" style="left:1189px;top:710px;color:#bbbbbb;font-size:12.2px;">6:18</div>
<div class="t" style="left:1224px;top:710px;color:#bbbbbb;font-size:10.8px;">CRLF</div>
<svg style="left:1253px;top:712px;" width="6" height="11" viewBox="0 0 6 11"><path d="M0 4h6L3 0zM0 7h6L3 11z" fill="#bbbbbb"/></svg>
<div class="t" style="left:1269px;top:710px;color:#bbbbbb;font-size:12px;">UTF-8</div>
<svg style="left:1304px;top:712px;" width="6" height="11" viewBox="0 0 6 11"><path d="M0 4h6L3 0zM0 7h6L3 11z" fill="#bbbbbb"/></svg>
<svg style="left:1323px;top:713px;" width="10" height="10" viewBox="0 0 10 10"><path d="M1.5 4V2a2 2 0 0 1 4 0" fill="none" stroke="#9a9a9a"/><rect x="3" y="4" width="7" height="6" fill="#9a9a9a"/></svg>
<svg style="left:1345px;top:711px;" width="14" height="15" viewBox="0 0 14 15"><circle cx="7" cy="5" r="4.5" fill="none" stroke="#9a9a9a"/><path d="M1 6h12M3 9c0 4 8 4 8 0M5 11h4M2 15c1-3 9-3 10 0" fill="none" stroke="#9a9a9a"/></svg>
<div class="a" style="left:309px;top:706px;width:186px;height:22px;background:#ffffff;"></div>
<svg style="left:288px;top:701px;" width="30" height="29" viewBox="0 0 30 29"><g transform="rotate(-14 15 14.5)"><rect x="3" y="3" width="24" height="23" rx="3.5" fill="#f25522"/><path d="M22 8.2C16 6.5 8 7 7.8 10.5C7.6 13.5 21 12.5 21 16.8C21 20.5 12 21.5 7.5 20.5" fill="none" stroke="#fff" stroke-width="3.6" stroke-linecap="butt"/></g></svg>
<svg style="left:323px;top:710px;" width="15" height="14" viewBox="0 0 15 14"><rect x="1" y="3" width="13" height="7" rx="1.2" fill="none" stroke="#1a6fc9" stroke-width="2"/><rect x="6.5" y="0" width="2" height="14" fill="#1a6fc9"/></svg>
<svg style="left:347px;top:711px;" width="10" height="10" viewBox="0 0 10 10"><circle cx="2" cy="2" r="1.5" fill="#1a6fc9"/><path d="M8 3c1 3 0 5-3 7" fill="none" stroke="#1a6fc9" stroke-width="2"/></svg>
<svg style="left:366px;top:709px;" width="16" height="16" viewBox="0 0 16 16"><circle cx="8" cy="8" r="7" fill="none" stroke="#1a6fc9" stroke-width="1.8"/><circle cx="5.5" cy="6" r="1" fill="#1a6fc9"/><circle cx="10.5" cy="6" r="1" fill="#1a6fc9"/><path d="M4.5 9a3.5 3 0 0 0 7 0" fill="none" stroke="#1a6fc9" stroke-width="1.5"/></svg>
<svg style="left:390px;top:709px;" width="12" height="16" viewBox="0 0 12 16"><rect x="3" y="0" width="6" height="10" rx="3" fill="#1a6fc9"/><path d="M1 7a5 5 0 0 0 10 0M6 12v3M3 15.5h6" fill="none" stroke="#1a6fc9" stroke-width="1.5"/></svg>
<svg style="left:410px;top:711px;" width="16" height="11" viewBox="0 0 16 11"><rect x="0.5" y="0.5" width="15" height="10" rx="1.5" fill="none" stroke="#1a6fc9" stroke-width="1.5"/><g fill="#1a6fc9"><rect x="3" y="3" width="2" height="1.5"/><rect x="6" y="3" width="2" height="1.5"/><rect x="9" y="3" width="2" height="1.5"/><rect x="12" y="3" width="1.5" height="1.5"/><rect x="3" y="5.5" width="2" height="1.5"/><rect x="6" y="5.5" width="2" height="1.5"/><rect x="9" y="5.5" width="2" height="1.5"/><rect x="4" y="8" width="8" height="1.2"/></g></svg>
<svg style="left:434px;top:709px;" width="15" height="16" viewBox="0 0 15 16"><circle cx="6" cy="4" r="3.5" fill="#1a6fc9"/><path d="M0 15a6 6 0 0 1 12 0z" fill="#1a6fc9"/><rect x="8" y="9" width="7" height="7" fill="#fff"/><text x="9" y="15.5" font-size="7" font-weight="bold" font-family="Liberation Sans" fill="#1a6fc9">s</text></svg>
<svg style="left:455px;top:710px;" width="14" height="14" viewBox="0 0 14 14"><path d="M4 0L0 3l2 3l2-1v9h6V5l2 1l2-3l-4-3c-1 2-5 2-6 0z" fill="#1a6fc9"/></svg>
<svg style="left:477px;top:711px;" width="14" height="14" viewBox="0 0 14 14"><rect x="0" y="0" width="6" height="6" fill="#1a6fc9"/><rect x="8" y="0" width="6" height="6" fill="none" stroke="#1a6fc9" stroke-width="1.5"/><rect x="0" y="8" width="6" height="6" fill="#1a6fc9"/><rect x="8" y="8" width="6" height="6" fill="#1a6fc9"/></svg>
<div class="a" style="left:0px;top:728px;width:1366px;height:40px;background:#0d0d0d;"></div>
<svg style="left:15px;top:740px;" width="17" height="17" viewBox="0 0 17 17"><path d="M0 2.5L7 1.5V8H0zM8 1.3L17 0V8H8zM0 9h7v6.5L0 14.5zM8 9h9v8L8 15.7z" fill="#fff"/></svg>
<div class="a" style="left:48px;top:728px;width:344px;height:40px;background:#f0f0f0;"></div>
<svg style="left:57px;top:738px;" width="21" height="21" viewBox="0 0 21 21"><circle cx="10.5" cy="10.5" r="9" fill="none" stroke="#000" stroke-width="2.6"/></svg>
<div class="t" style="left:88px;top:739px;color:#1a1a1a;font-size:14px;line-height:18px">在这里输入你要搜索的内容</div>
<svg style="left:365px;top:739px;" width="12" height="18" viewBox="0 0 12 18"><rect x="3" y="0.8" width="6" height="10" rx="3" fill="none" stroke="#222" stroke-width="1.3"/><path d="M0.8 8a5.2 5.2 0 0 0 10.4 0M6 13.5v3.5M3 17h6" fill="none" stroke="#222" stroke-width="1.3"/></svg>
<svg style="left:407px;top:740px;" width="18" height="16" viewBox="0 0 18 16"><path d="M1 1h10M1 15h10M3 3.5h7v9H3z" fill="none" stroke="#fff" stroke-width="1.3"/><rect x="13" y="1" width="1.5" height="3" fill="#fff"/><rect x="12.5" y="5" width="3" height="3" fill="#fff"/><rect x="13" y="9" width="1.5" height="6" fill="#fff"/></svg>
<svg style="left:453px;top:736px;" width="24" height="24" viewBox="0 0 24 24"><defs><radialGradient id="ff" cx="0.75" cy="0.25" r="0.9"><stop offset="0" stop-color="#fff14a"/><stop offset="0.35" stop-color="#ffb020"/><stop offset="0.7" stop-color="#ff5a2a"/><stop offset="1" stop-color="#e0206a"/></radialGradient></defs><circle cx="12" cy="12.5" r="11" fill="url(#ff)"/><path d="M16 1c3 2 6 5 6 10c-1-3-3-4-4-4z" fill="#ffd93a"/><circle cx="11" cy="12" r="5.2" fill="#3b53d6"/><path d="M4 7c2-1 4 0 5 1c-2 1-3 3-1 5c2 2 5 2 7 0c0 4-3 6-6 6C5 19 3 15 3 11z" fill="#ff6b2b"/><path d="M2 4c1 1 3 1 4 0c-1 2-2 3-3 4z" fill="#ff8a2a"/></svg>
<svg style="left:500px;top:737px;" width="22" height="22" viewBox="0 0 22 22"><circle cx="11" cy="11" r="11" fill="#db4437"/><path d="M11 11L1.5 5.5A11 11 0 0 0 11 22z" fill="#0f9d58"/><path d="M11 11H22A11 11 0 0 1 11 22z" fill="#f4b400"/><circle cx="11" cy="11" r="5" fill="#fff"/><circle cx="11" cy="11" r="3.8" fill="#4285f4"/></svg>
<svg style="left:545px;top:738px;" width="23" height="19" viewBox="0 0 23 19"><rect x="0.5" y="0.5" width="22" height="18" fill="#000" stroke="#aaa"/><rect x="1" y="1" width="21" height="2" fill="#bbb"/><text x="2.5" y="10" font-size="6" font-family="Liberation Mono" fill="#ddd">C:\</text><rect x="12" y="9" width="8" height="1" fill="#ddd"/></svg>
<svg style="left:590px;top:737px;" width="26" height="22" viewBox="0 0 26 22"><path d="M1 10c4 0 5 4 9 6c5 2 12 0 14-6c1-5-2-9-7-9c-5 0-8 3-8 7c0 3 2 5 5 5c2 0 4-2 4-4c0-2-1-3-3-3" fill="none" stroke="#ee5a3a" stroke-width="3"/><path d="M1 10c0 6 6 11 12 11c5 0 8-2 10-5c-3 3-8 3-12 1C7 15 5 11 1 10z" fill="#e63e2a"/></svg>
<svg style="left:637px;top:736px;" width="24" height="24" viewBox="0 0 24 24"><rect x="0" y="0" width="24" height="24" rx="3" fill="#f4f6ff"/><path d="M3 5c4 0 6 2 8 6l9-8c-1 5-3 8-6 10l5 2c-3 1-5 1-7 0l-2 7c-2-5-5-10-7-17z" fill="#7a8cf0"/></svg>
<svg style="left:684px;top:737px;" width="22" height="22" viewBox="0 0 22 22"><path d="M3 12C3 6 7 2.5 12 2.5c5.5 0 8.5 4 8.5 8.5v1.5H8c0 4 3 6 6.5 6c2 0 4-0.6 5.5-1.6v3.6c-1.6 0.9-3.6 1.5-6.5 1.5C7 22 3 18 3 12zM8.2 9.5h7.8c0-2.5-1.6-4-3.8-4C10 5.5 8.6 7 8.2 9.5z" fill="#0a78d4"/><path d="M0.5 9C2 4 6.5 1 11 1.5C7 2.5 4.5 5.5 3.5 9z" fill="#0a78d4"/></svg>
<svg style="left:729px;top:736px;" width="24" height="24" viewBox="0 0 24 24"><rect x="0" y="0" width="24" height="24" rx="4" fill="#fff"/><circle cx="7" cy="14.5" r="3.8" fill="none" stroke="#2aa6f2" stroke-width="2.4"/><circle cx="17" cy="14.5" r="3.8" fill="none" stroke="#2aa6f2" stroke-width="2.4"/><circle cx="12" cy="9" r="4.2" fill="none" stroke="#2aa6f2" stroke-width="2.4"/><path d="M7.8 9a4.2 4.2 0 0 0 8.4 0" fill="none" stroke="#f05a6a" stroke-width="2.4"/><rect x="8" y="21" width="4" height="2" fill="#f05a6a"/><rect x="12" y="21" width="4" height="2" fill="#2aa6f2"/></svg>
<svg style="left:775px;top:736px;" width="24" height="24" viewBox="0 0 24 24"><rect x="0" y="0" width="24" height="24" fill="#fff"/><path d="M7 7L2.5 12L7 17M17 7L21.5 12L17 17M13.5 6L10.5 18" fill="none" stroke="#3cb34a" stroke-width="1.6"/></svg>
<svg style="left:822px;top:737px;" width="22" height="22" viewBox="0 0 22 22"><rect x="1" y="1" width="20" height="20" rx="2" fill="#f2f2f2" transform="rotate(4 11 11)"/><text x="6.5" y="17" font-size="13" font-family="Liberation Sans" fill="#333">T</text></svg>
<svg style="left:868px;top:737px;" width="22" height="20" viewBox="0 0 22 20"><path d="M0 3h8l2 2h12v15H0z" fill="#f7d774"/><rect x="0" y="2" width="9" height="3" fill="#e8b83a"/><path d="M6 11h10v9h-3v-5H9v5H6z" fill="#2aa0e0"/><rect x="6" y="11" width="10" height="3" fill="#2aa0e0"/></svg>
<svg style="left:913px;top:736px;" width="24" height="24" viewBox="0 0 24 24"><defs><linearGradient id="dg" x1="0" y1="0" x2="0" y2="1"><stop offset="0" stop-color="#c8c8f0"/><stop offset="0.4" stop-color="#9090dc"/><stop offset="1" stop-color="#6a6ac0"/></linearGradient></defs><path d="M1 2.5C6 0 13 0 18 2l4 0.5l-3 1.5c3 4 3 9 0 13c-2 3-5 4-7 4l-3 2l1-3c-1-1-1-2 0-3c3-1 5-3 5-6c0-4-3-7-8-7C5 4 3 4 1 2.5z" fill="url(#dg)"/></svg>
<svg style="left:959px;top:736px;" width="24" height="24" viewBox="0 0 24 24"><circle cx="12" cy="12" r="12" fill="#3a96ea"/><path d="M15 12a12 12 0 0 1-3 12a12 12 0 0 0 12-12z" fill="#2a7fd0" opacity="0.6"/><path d="M13.5 4.5L7 11l4 2.5M10.5 19.5L17 13l-4-2.5" fill="none" stroke="#fff" stroke-width="2.6" stroke-linejoin="miter"/></svg>
<svg style="left:1005px;top:737px;" width="23" height="23" viewBox="0 0 23 23"><circle cx="14" cy="9" r="6.5" fill="none" stroke="#ff7a00" stroke-width="3.2"/><path d="M9.5 13.5L2 21" stroke="#ff7a00" stroke-width="3.6" stroke-linecap="round"/></svg>
<div class="a" style="left:1039px;top:728px;width:45px;height:40px;background:#3d3d3d;"></div>
<svg style="left:1049px;top:736px;" width="24" height="24" viewBox="0 0 24 24"><path d="M3 3L12 1L10 12L1 10z" fill="#fe315d"/><path d="M1 10L10 12L3 23z" fill="#9a4bc7"/><path d="M13 0L23 6L21 20L12 23z" fill="#087cfa"/><path d="M2 14L6 11L9 15z" fill="#ff8a30"/><rect x="4.5" y="4.5" width="15" height="15" fill="#000"/><text x="6" y="13" font-size="8" font-family="Liberation Mono" font-weight="bold" fill="#fff">IJ</text><rect x="6" y="16" width="6" height="1.2" fill="#fff"/></svg>
<div class="a" style="left:447px;top:766px;width:37px;height:2px;background:#76b9ed;"></div>
<div class="a" style="left:493px;top:766px;width:37px;height:2px;background:#76b9ed;"></div>
<div class="a" style="left:539px;top:766px;width:37px;height:2px;background:#76b9ed;"></div>
<div class="a" style="left:585px;top:766px;width:37px;height:2px;background:#76b9ed;"></div>
<div class="a" style="left:631px;top:766px;width:37px;height:2px;background:#76b9ed;"></div>
<div class="a" style="left:677px;top:766px;width:37px;height:2px;background:#76b9ed;"></div>
<div class="a" style="left:723px;top:766px;width:37px;height:2px;background:#76b9ed;"></div>
<div class="a" style="left:769px;top:766px;width:37px;height:2px;background:#76b9ed;"></div>
<div class="a" style="left:815px;top:766px;width:37px;height:2px;background:#76b9ed;"></div>
<div class="a" style="left:861px;top:766px;width:37px;height:2px;background:#76b9ed;"></div>
<div class="a" style="left:907px;top:766px;width:37px;height:2px;background:#76b9ed;"></div>
<div class="a" style="left:953px;top:766px;width:37px;height:2px;background:#76b9ed;"></div>
<div class="a" style="left:998px;top:766px;width:37px;height:2px;background:#76b9ed;"></div>
<div class="a" style="left:1039px;top:766px;width:45px;height:2px;background:#76b9ed;"></div>
<svg style="left:1092px;top:744px;" width="13" height="7" viewBox="0 0 13 7"><path d="M0.5 6.5L6.5 0.8L12.5 6.5" fill="none" stroke="#fff" stroke-width="1.3"/></svg>
<svg style="left:1113px;top:741px;" width="18" height="14" viewBox="0 0 18 14"><path d="M1.5 1v2.5M4.5 1v2.5M0.8 3.5h4.4v1.5a2.2 2.2 0 0 1-4.4 0z" fill="none" stroke="#fff" stroke-width="0.9"/><path d="M3 7v6" stroke="#fff"/><rect x="5.5" y="4.5" width="11" height="8" fill="none" stroke="#fff"/><rect x="5" y="6" width="10" height="5" fill="#fff"/><rect x="17" y="7" width="1" height="3" fill="#fff"/></svg>
<svg style="left:1141px;top:743px;" width="13" height="12" viewBox="0 0 13 12"><path d="M1 11a10 10 0 0 1 11-10M3.5 11a7.5 7.5 0 0 1 8.5-7.5M6 11a5 5 0 0 1 6-5" fill="none" stroke="#fff" stroke-width="1.1"/><circle cx="11" cy="10.5" r="1.6" fill="#fff"/></svg>
<svg style="left:1162px;top:741px;" width="16" height="15" viewBox="0 0 16 15"><path d="M1 5h3l4-4v13l-4-4H1z" fill="none" stroke="#fff" stroke-width="1.1"/><path d="M10 4.5a4 4 0 0 1 0 6M12.5 2.5a7 7 0 0 1 0 10M14.8 0.8a9.5 9.5 0 0 1 0 13.4" fill="none" stroke="#fff" stroke-width="1.1"/></svg>
<div class="t" style="left:1187px;top:739px;color:#ffffff;font-size:14px;line-height:18px">中</div>
<svg style="left:1213px;top:740px;" width="18" height="17" viewBox="0 0 18 17"><g transform="rotate(-10 9 8.5)"><rect x="1" y="1" width="16" height="15" rx="2" fill="#f0532a"/><text x="3.5" y="14" font-family="Liberation Sans" font-weight="bold" font-size="14" fill="#fff">S</text></g></svg>
<div class="t" style="left:1261px;top:732px;color:#ffffff;font-size:13px;line-height:15px">22:33</div>
<div class="t" style="left:1250px;top:750px;color:#ffffff;font-size:13px;line-height:15px">2019/3/9</div>
<svg style="left:1325px;top:740px;" width="17" height="17" viewBox="0 0 17 17"><path d="M0.6 0.6h15.8v11.8H10l-2.5 3l-2.5-3H0.6z" fill="none" stroke="#fff" stroke-width="1.2"/></svg>
<div class="a" style="left:1360px;top:728px;width:1px;height:40px;background:#555;"></div>
</body></html>
